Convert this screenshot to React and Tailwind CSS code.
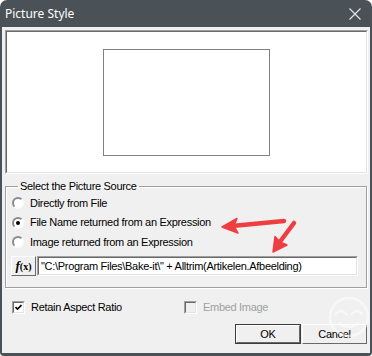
import React from 'react';

const font = { fontFamily: '"Liberation Sans", Arial, sans-serif' };

function Radio({ checked }) {
  return (
    <div className="relative w-[12px] h-[12px] rounded-full border-2 border-t-[#8a8a8a] border-l-[#8a8a8a] border-b-[#fbfbfb] border-r-[#fbfbfb] bg-white shrink-0">
      {checked && <div className="absolute left-[2px] top-[2px] w-[4px] h-[4px] rounded-full bg-black" />}
    </div>
  );
}

function Check({ checked, disabled }) {
  return (
    <div className="w-[13px] h-[13px] border border-t-[#a0a0a0] border-l-[#a0a0a0] border-b-white border-r-white shrink-0">
      <div className={`w-full h-full border border-t-[#696969] border-l-[#696969] border-b-[#e3e3e3] border-r-[#e3e3e3] flex items-center justify-center ${disabled ? 'bg-[#f0f0f0]' : 'bg-white'}`}>
        {checked && (
          <svg width="7" height="7" viewBox="0 0 7 7">
            <path d="M0.5 3 L2.5 5 L6.5 1" stroke="#000" strokeWidth="1.6" fill="none" />
          </svg>
        )}
      </div>
    </div>
  );
}

function Sunken({ className, children }) {
  return (
    <div className={`border border-t-[#a0a0a0] border-l-[#a0a0a0] border-b-white border-r-white ${className}`}>
      <div className="w-full h-full border border-t-[#696969] border-l-[#696969] border-b-[#e3e3e3] border-r-[#e3e3e3] bg-white">
        {children}
      </div>
    </div>
  );
}

function Button({ children, isDefault, className }) {
  const inner = (
    <div className="w-full h-full border border-t-white border-l-white border-b-[#696969] border-r-[#696969] bg-[#f0f0f0] flex items-center justify-center text-[11px] text-black">
      {children}
    </div>
  );
  return (
    <div className={`${isDefault ? 'border border-[#3c3c3c]' : ''} ${className}`}>
      {inner}
    </div>
  );
}

export default function App() {
  return (
    <div className="relative w-[372px] h-[356px] bg-[#4a5157] rounded-t-[7px] rounded-b-[4px] flex flex-col overflow-hidden" style={font}>
      {/* title bar */}
      <div className="h-[27px] flex items-center justify-between pl-[5px] pr-[11px] shrink-0">
        <span className="text-white text-[12px]" style={{ fontFamily: '"Noto Sans", "Open Sans", sans-serif' }}>Picture Style</span>
        <svg width="12" height="12" viewBox="0 0 12 12">
          <path d="M0.5 0.5 L11.5 11.5 M11.5 0.5 L0.5 11.5" stroke="#e8e8e8" strokeWidth="1.1" />
        </svg>
      </div>

      {/* client area */}
      <div className="flex-1 mx-[2px] mb-[3px] bg-[#f0f0f0] flex flex-col pt-[3px] text-[11px] tracking-[-0.3px] text-black">
        <Sunken className="ml-[3px] mr-[2px] h-[144px]">
          <div className="w-full h-full flex items-center justify-center">
            <div className="w-[167px] h-[107px] border border-[#808080]" />
          </div>
        </Sunken>

        <fieldset className="ml-[3px] mr-[3px] mt-[6px] border border-[#a0a0a0] shadow-[inset_1px_1px_0_#fff,1px_1px_0_#fff] pl-[6px] pr-[8px] pb-[11px]">
          <legend className="ml-[6px] px-[2px] leading-[13px]">Select the Picture Source</legend>
          <div className="h-[20px] flex items-center gap-[6px]">
            <Radio />
            <span>Directly from File</span>
          </div>
          <div className="h-[19px] flex items-center gap-[6px]">
            <Radio checked />
            <span>File Name returned from an Expression</span>
          </div>
          <div className="h-[20px] flex items-center gap-[6px]">
            <Radio />
            <span>Image returned from an Expression</span>
          </div>
          <div className="mt-[4px] flex items-center gap-[1px] -ml-[1px]">
            <Button className="w-[25px] h-[20px]">
              <span className="font-bold text-[13px] tracking-normal" style={{ fontFamily: '"Liberation Serif", serif' }}>
                <i>f</i><span className="text-[10px]">(x)</span>
              </span>
            </Button>
            <Sunken className="flex-1 h-[20px]">
              <div className="h-full flex items-center pl-[2px] whitespace-nowrap overflow-hidden">
                "C:\Program Files\Bake-it\" + Alltrim(Artikelen.Afbeelding)
              </div>
            </Sunken>
          </div>
        </fieldset>

        <div className="mt-[13px] flex items-center h-[13px]">
          <div className="w-[182px] pl-[10px] flex items-center gap-[6px]">
            <Check checked />
            <span>Retain Aspect Ratio</span>
          </div>
          <div className="flex items-center gap-[6px] text-[#a0a0a0]">
            <Check disabled />
            <span>Embed Image</span>
          </div>
        </div>

        <div className="mt-[10px] flex justify-end gap-[1px] pr-[3px]">
          <Button isDefault className="w-[66px] h-[20px]">OK</Button>
          <Button className="w-[65px] h-[20px]">Cancel</Button>
        </div>
      </div>

      {/* watermark */}
      <svg className="absolute left-[327px] top-[295px]" width="44" height="44" viewBox="0 0 44 44">
        <g stroke="#ffffff" strokeWidth="2.5" fill="none" opacity="0.55">
          <circle cx="22" cy="22" r="19" />
          <path d="M8 20 Q14 12 20 20" />
          <path d="M24 20 Q30 12 36 20" />
          <path d="M12 28 Q22 36 32 28" />
        </g>
      </svg>

      {/* red annotation arrows */}
      <svg className="absolute left-0 top-0 pointer-events-none" width="372" height="356" viewBox="0 0 372 356">
        <g fill="#ef3e42" stroke="#ef3e42" strokeLinecap="round" strokeLinejoin="round">
          <line x1="284" y1="221" x2="232" y2="226" strokeWidth="4.5" />
          <polygon points="222,227 237,218.5 234,226 238,233" strokeWidth="1.5" />
          <line x1="294" y1="223" x2="279" y2="243" strokeWidth="4.5" />
          <polygon points="273,252 275,236.5 280,242 287,245" strokeWidth="1.5" />
        </g>
      </svg>
    </div>
  );
}
